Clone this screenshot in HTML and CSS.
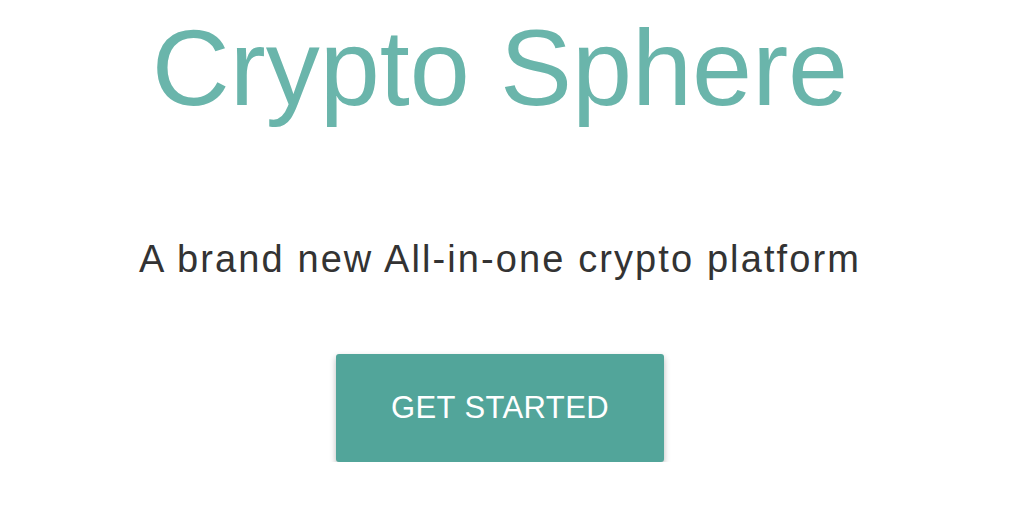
FILE: index.html
```html
<!DOCTYPE html>
<html lang="en">
<head>
<meta charset="utf-8">
<title>Crypto Sphere</title>
<link rel="stylesheet" href="styles.css">
</head>
<body>
<main class="hero">
  <h1 class="hero-title">Crypto Sphere</h1>
  <p class="hero-subtitle">A brand new All-in-one crypto platform</p>
  <button class="hero-button" type="button">GET STARTED</button>
</main>
</body>
</html>
```

FILE: styles.css
```css
html, body {
  margin: 0;
  padding: 0;
  background: #ffffff;
}

body {
  font-family: "Liberation Sans", Arial, sans-serif;
}

.hero {
  width: 1000px;
  display: flex;
  flex-direction: column;
  align-items: center;
  text-align: center;
}

.hero-title {
  margin: 0;
  padding-top: 6px;
  font-size: 108px;
  font-weight: 400;
  line-height: 124px;
  color: #6ab5ab;
}

.hero-subtitle {
  margin: 105px 0 0;
  font-size: 38px;
  line-height: 48px;
  letter-spacing: 2.1px;
  color: #333333;
}

.hero-button {
  margin-top: 71px;
  width: 328px;
  height: 108px;
  border: none;
  border-radius: 3px;
  background: #52a59a;
  color: #ffffff;
  font-family: "Liberation Sans", Arial, sans-serif;
  font-size: 31px;
  letter-spacing: 0.4px;
  box-shadow: 0 3px 6px rgba(0, 0, 0, 0.28);
}
```
